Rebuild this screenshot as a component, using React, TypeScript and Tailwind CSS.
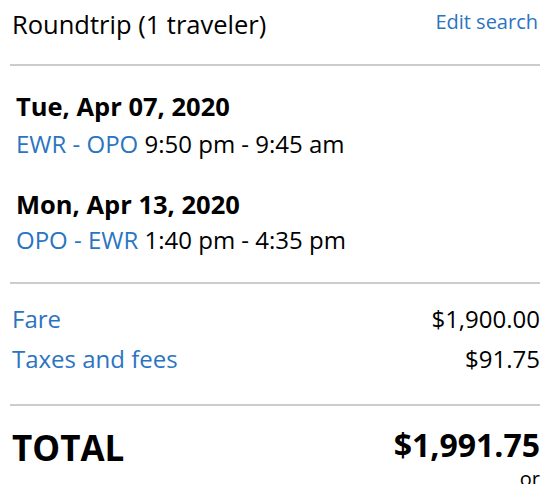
export default function App() {
  const blue = 'text-[#2b74c1]';
  return (
    <div
      className="w-[558px] h-[484px] overflow-hidden bg-white pl-[10px] pr-[18px] text-black"
      style={{ fontFamily: '"Open Sans", sans-serif' }}
    >
      <div className="flex items-start justify-between pt-[9px] pb-[25px] pl-[2px] border-b-2 border-[#cccccc]">
        <div className="text-[25.5px] leading-[30px]">Roundtrip (1 traveler)</div>
        <a className={`${blue} text-[20px] leading-[26px] mr-[2px]`}>Edit search</a>
      </div>

      <div className="pl-[6px] pt-[22px] pb-[24px] border-b-2 border-[#cccccc]">
        <div className="font-bold text-[25.5px] leading-[36px]">Tue, Apr 07, 2020</div>
        <div className="mt-[2px] text-[24px] leading-[36px]">
          <span className={blue}>EWR - OPO</span> 9:50 pm - 9:45 am
        </div>
        <div className="mt-[24px] font-bold text-[25.5px] leading-[36px]">Mon, Apr 13, 2020</div>
        <div className="text-[24px] leading-[36px]">
          <span className={blue}>OPO - EWR</span> 1:40 pm - 4:35 pm
        </div>
      </div>

      <div className="pl-[2px] pt-[15px] pb-[25px] border-b-2 border-[#cccccc] text-[24px] leading-[40px]">
        <div className="flex justify-between">
          <span className={blue}>Fare</span>
          <span>$1,900.00</span>
        </div>
        <div className="flex justify-between">
          <span className={blue}>Taxes and fees</span>
          <span>$91.75</span>
        </div>
      </div>

      <div className="pl-[2px] pt-[18px] flex items-start justify-between font-bold">
        <span className="text-[35px] leading-[48px]">TOTAL</span>
        <span className="text-[32px] leading-[41px]">$1,991.75</span>
      </div>
      <div className="-mt-[6px] text-right text-[20px] leading-[26px]">or</div>
    </div>
  );
}
